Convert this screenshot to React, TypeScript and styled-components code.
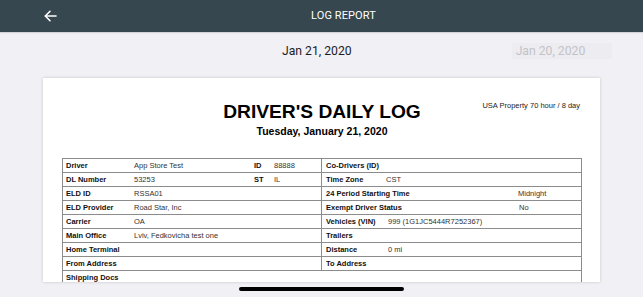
import React from "react";
import styled, { createGlobalStyle } from "styled-components";

const Global = createGlobalStyle`
  html, body { margin: 0; padding: 0; background: #f1f0f5; }
  * { box-sizing: border-box; }
`;

const Screen = styled.div`
  position: relative;
  width: 643px;
  height: 297px;
  overflow: hidden;
  background: #f1f0f5;
  display: flex;
  flex-direction: column;
`;

const TopBar = styled.header`
  height: 32px;
  flex: none;
  background: #37474f;
  display: grid;
  grid-template-columns: 1fr auto 1fr;
  align-items: center;
  padding-left: 44px;
  box-shadow: 0 1px 1px rgba(0, 0, 0, 0.12);
`;

const BackButton = styled.div`
  display: flex;
  align-items: center;
  height: 32px;
  color: #ffffff;
`;

const BarTitle = styled.h1`
  margin: 0;
  font-family: Roboto, "Liberation Sans", sans-serif;
  font-weight: 400;
  font-size: 11px;
  letter-spacing: 0.1px;
  color: #ffffff;
  line-height: 32px;
`;

const DateStrip = styled.div`
  flex: none;
  height: 46px;
  display: flex;
  align-items: flex-start;
  padding: 11px 0 0 282px;
  gap: 160px;
`;

const DateLabel = styled.span<{ $muted?: boolean }>`
  font-family: Roboto, "Liberation Sans", sans-serif;
  font-size: 12.2px;
  line-height: 16px;
  color: ${(p) => (p.$muted ? "#c3c3c7" : "#1d1d1f")};
  background: ${(p) => (p.$muted ? "#ececf1" : "transparent")};
  padding: ${(p) => (p.$muted ? "0 27px 0 4px" : "0")};
`;

const Paper = styled.section`
  flex: none;
  height: 204px;
  margin: 0 43px;
  background: #ffffff;
  box-shadow: 0 0 3px rgba(0, 0, 0, 0.18);
  overflow: hidden;
  padding: 23px 18px 0 19px;
  font-family: "Liberation Sans", Arial, sans-serif;
`;

const DocHead = styled.div`
  display: grid;
  grid-template-columns: 1fr auto 1fr;
  align-items: start;
`;

const DocTitle = styled.h2`
  grid-column: 2;
  grid-row: 1;
  margin: 0;
  font-size: 19.2px;
  line-height: 22px;
  font-weight: 700;
  color: #000;
  text-align: center;
`;

const RuleSet = styled.div`
  grid-column: 3;
  grid-row: 1;
  justify-self: end;
  margin: 0 2px 0 0;
  font-size: 7.5px;
  line-height: 9px;
  color: #222;
`;

const DocDate = styled.div`
  grid-column: 1 / -1;
  grid-row: 2;
  margin-top: 2px;
  text-align: center;
  font-size: 10.5px;
  line-height: 13px;
  font-weight: 700;
  color: #000;
`;

const Sheet = styled.div`
  margin-top: 20px;
  border: 1px solid #8c8c8c;
  border-bottom: none;
`;

const Row = styled.div`
  display: grid;
  grid-template-columns: 259px 1fr;
  height: 14px;
  border-bottom: 1px solid #8c8c8c;
`;

const WideRow = styled.div`
  height: 14px;
  padding-left: 3px;
  display: flex;
  align-items: center;
  border-bottom: 1px solid #8c8c8c;
`;

const LeftCell = styled.div`
  display: grid;
  grid-template-columns: 68px 120px 20px 1fr;
  align-items: center;
  padding-left: 3px;
  border-right: 1px solid #8c8c8c;
`;

const RightCell = styled.div<{ $labelWidth: number }>`
  display: grid;
  grid-template-columns: ${(p) => p.$labelWidth}px 1fr;
  align-items: center;
  padding-left: 4px;
`;

const Label = styled.span`
  font-size: 7.5px;
  line-height: 13px;
  font-weight: 700;
  color: #111;
  white-space: nowrap;
`;

const Value = styled.span`
  font-size: 7.5px;
  line-height: 13px;
  color: #333;
  white-space: nowrap;
`;

const HomeIndicator = styled.div`
  position: absolute;
  left: 239px;
  top: 287px;
  width: 165px;
  height: 4px;
  border-radius: 2px;
  background: #000;
`;

type RowData = {
  l: string;
  lv?: string;
  idL?: string;
  idV?: string;
  r: string;
  rv?: string;
  rw: number;
};

const rows: RowData[] = [
  { l: "Driver", lv: "App Store Test", idL: "ID", idV: "88888", r: "Co-Drivers (ID)", rw: 62 },
  { l: "DL Number", lv: "53253", idL: "ST", idV: "IL", r: "Time Zone", rv: "CST", rw: 60 },
  { l: "ELD ID", lv: "RSSA01", r: "24 Period Starting Time", rv: "Midnight", rw: 192 },
  { l: "ELD Provider", lv: "Road Star, Inc", r: "Exempt Driver Status", rv: "No", rw: 193 },
  { l: "Carrier", lv: "OA", r: "Vehicles (VIN)", rv: "999 (1G1JC5444R7252367)", rw: 62 },
  { l: "Main Office", lv: "Lviv, Fedkovicha test one", r: "Trailers", rw: 62 },
  { l: "Home Terminal", r: "Distance", rv: "0 mi", rw: 62 },
  { l: "From Address", r: "To Address", rw: 62 },
];

export default function App() {
  return (
    <Screen>
      <Global />
      <TopBar>
        <BackButton>
          <svg width="13" height="12" viewBox="0 0 13 12" fill="none" stroke="#fff" strokeWidth="1.6" strokeLinecap="round" strokeLinejoin="round">
            <path d="M12 6H1.5" />
            <path d="M6 1.3L1.3 6L6 10.7" />
          </svg>
        </BackButton>
        <BarTitle>LOG REPORT</BarTitle>
      </TopBar>
      <DateStrip>
        <DateLabel>Jan 21, 2020</DateLabel>
        <DateLabel $muted>Jan 20, 2020</DateLabel>
      </DateStrip>
      <Paper>
        <DocHead>
          <DocTitle>DRIVER'S DAILY LOG</DocTitle>
          <RuleSet>USA Property 70 hour / 8 day</RuleSet>
          <DocDate>Tuesday, January 21, 2020</DocDate>
        </DocHead>
        <Sheet>
          {rows.map((r) => (
            <Row key={r.l}>
              <LeftCell>
                <Label>{r.l}</Label>
                <Value>{r.lv ?? ""}</Value>
                <Label>{r.idL ?? ""}</Label>
                <Value>{r.idV ?? ""}</Value>
              </LeftCell>
              <RightCell $labelWidth={r.rw}>
                <Label>{r.r}</Label>
                <Value>{r.rv ?? ""}</Value>
              </RightCell>
            </Row>
          ))}
          <WideRow>
            <Label>Shipping Docs</Label>
          </WideRow>
        </Sheet>
      </Paper>
      <HomeIndicator />
    </Screen>
  );
}
